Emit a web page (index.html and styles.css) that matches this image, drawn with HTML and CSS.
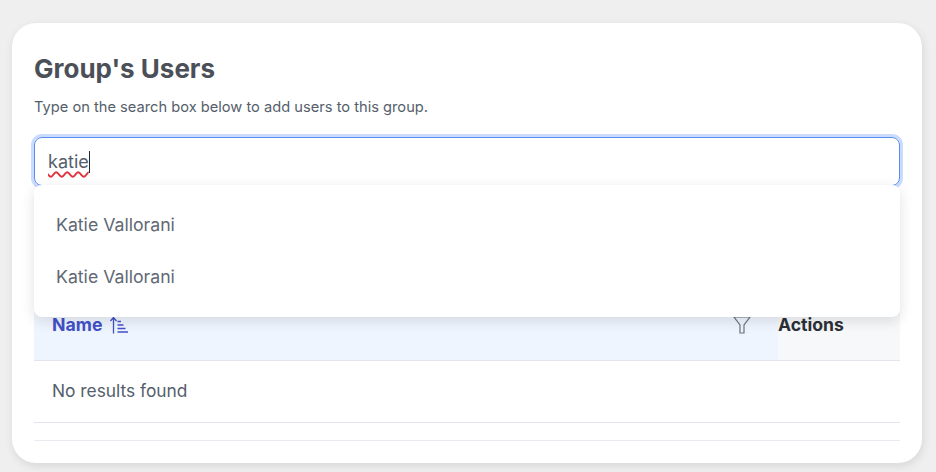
FILE: index.html
```html
<!DOCTYPE html>
<html lang="en">
<head>
<meta charset="utf-8">
<title>Group's Users</title>
<link rel="stylesheet" href="styles.css">
</head>
<body>
<main class="card">
  <h1 class="title">Group's Users</h1>
  <p class="hint">Type on the search box below to add users to this group.</p>
  <div class="search-wrap">
    <div class="search"><span class="typed">katie</span><span class="caret"></span></div>
    <ul class="menu">
      <li class="menu-item">Katie Vallorani</li>
      <li class="menu-item">Katie Vallorani</li>
    </ul>
  </div>
  <div class="table">
    <div class="head">
      <div class="th th-name">
        <span class="th-label">Name</span>
        <svg class="sort-icon" width="20" height="18" viewBox="0 0 20 18" fill="none" stroke="currentColor" stroke-width="1.3">
          <path d="M4.5 17.5V1.5M1.5 5 4.5 1.5 7.5 5"/>
          <path d="M8.5 5.5h3.5M8.5 9h6M8.5 12.5h8M8.5 16h10.5"/>
        </svg>
        <svg class="filter-icon" width="18" height="18" viewBox="0 0 18 18" fill="none" stroke="#6b7280" stroke-width="1.2">
          <path d="M1 1h16l-6 8v8H7V9z"/>
        </svg>
      </div>
      <div class="th th-actions">Actions</div>
    </div>
    <div class="row">No results found</div>
    <div class="foot"></div>
  </div>
</main>
</body>
</html>
```

FILE: styles.css
```css
* { box-sizing: border-box; }
html, body { margin: 0; height: 100%; }
body {
  background: #efefef;
  padding: 23px 14px 9px 12px;
  font-family: Inter, "Liberation Sans", sans-serif;
  color: #4b5563;
  overflow: hidden;
}
.card {
  height: 440px;
  background: #fff;
  border-radius: 24px;
  padding: 29px 22px 0;
  box-shadow: 1px 3px 10px rgba(0, 0, 0, .1);
}
.title {
  margin: 0;
  font-size: 26px;
  line-height: 34px;
  font-weight: 700;
  color: #4b5058;
}
.hint {
  margin: 11px 0 0;
  font-size: 14.67px;
  line-height: 20px;
  color: #555e6b;
}
.search-wrap { position: relative; margin-top: 20px; }
.search {
  height: 49px;
  border: 1px solid #5b8def;
  border-radius: 8px;
  box-shadow: 0 0 0 3px #c9dcff;
  padding: 0 13px;
  display: flex;
  align-items: center;
  font-size: 18px;
  color: #555e6b;
}
.typed { text-decoration: underline wavy #e0323c 1.5px; text-underline-offset: 3px; }
.caret { display: block; width: 1px; height: 22px; background: #1f2937; }
.menu {
  position: absolute;
  z-index: 2;
  top: 48px;
  left: 0;
  right: 0;
  margin: 0;
  padding: 14px 0;
  list-style: none;
  background: #fff;
  border-radius: 8px;
  box-shadow: 0 4px 14px rgba(0, 0, 0, .12);
}
.menu-item {
  height: 52px;
  padding: 0 22px 2px;
  display: flex;
  align-items: center;
  font-size: 17.7px;
  color: #5f6874;
}
.table { margin-top: 104px; }
.head { display: flex; height: 71px; border-bottom: 1px solid #e2e5ec; }
.th { display: flex; align-items: center; font-weight: 700; padding-bottom: 1px; }
.th-name {
  flex: 1;
  padding-left: 18px;
  padding-right: 18px;
  background: #eff5fe;
  color: #4351c8;
  font-size: 17.7px;
}
.th-label { margin-right: 7px; }
.sort-icon { flex: none; }
.filter-icon { margin-left: auto; margin-right: 9px; flex: none; }
.th-actions {
  width: 122px;
  background: #f7f8fa;
  color: #2b2f36;
  font-size: 17.6px;
}
.row {
  height: 62px;
  padding: 0 18px 2px;
  display: flex;
  align-items: center;
  font-size: 17.33px;
  border-bottom: 1px solid #e2e5ec;
  color: #555e6b;
}
.foot { height: 18px; border-bottom: 1px solid #e8eaef; }
```
